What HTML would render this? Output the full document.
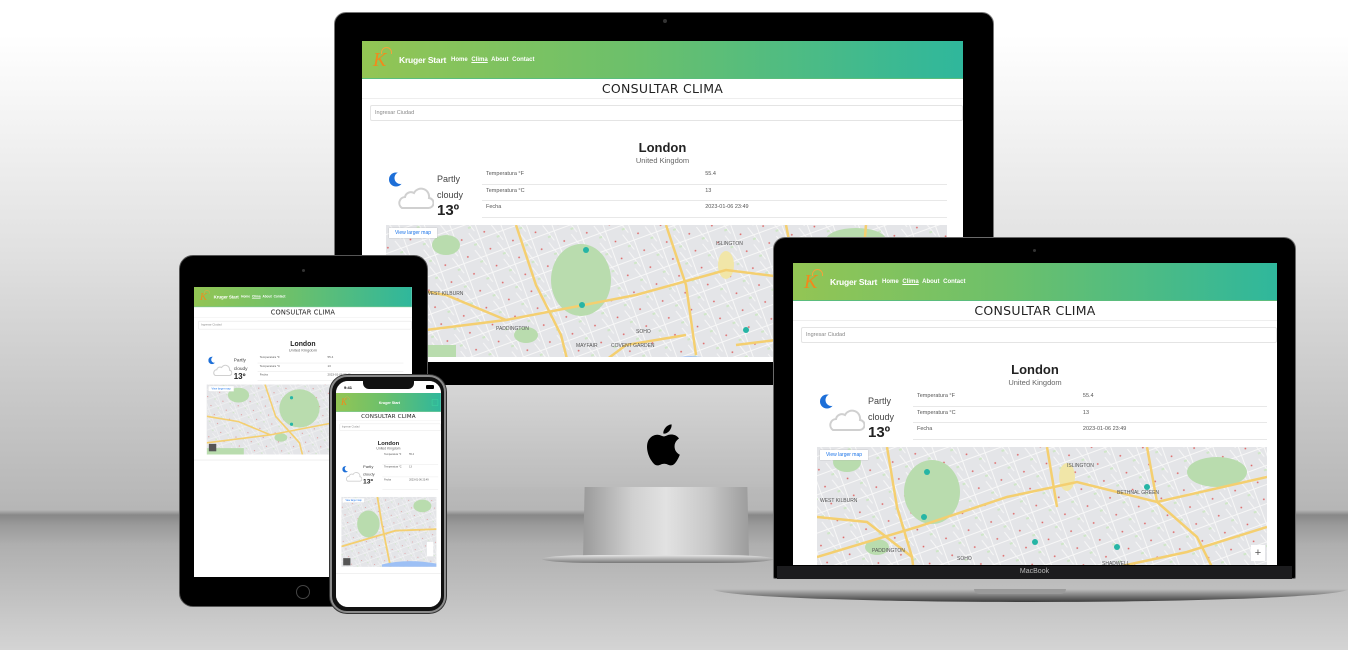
<!DOCTYPE html>
<html><head><meta charset="utf-8">
<style>
*{margin:0;padding:0;box-sizing:border-box}
body{width:1348px;height:650px;overflow:hidden;position:relative;font-family:"Liberation Sans",sans-serif;
background:linear-gradient(180deg,#fff 0px,#fff 35px,#f2f2f2 130px,#e1e1e1 250px,#cbcbcb 380px,#b6b6b6 510px,#888 515px,#9a9a9a 525px,#afafaf 545px,#c6c6c6 610px,#d4d4d4 650px)}
.abs{position:absolute}
.scr{position:absolute;overflow:hidden;background:#fff}
.app{position:absolute;left:0;top:0;background:#fff;transform-origin:0 0;color:#333}
.nav{height:38px;background:linear-gradient(90deg,#93c554,#6cc06b 45%,#2fb79c);position:relative;border-bottom:1px solid #5bbd7d}
.logo{position:absolute;left:11px;top:8px;font:italic 20px "Liberation Serif",serif;color:#f18a1c}
.logo:after{content:"";position:absolute;left:8px;top:-2px;width:9px;height:6px;border:1px solid #f3a33b;border-bottom:none;border-radius:8px 8px 0 0}
.brand{position:absolute;left:37px;top:14px;font-size:8.5px;color:#fff;font-weight:bold;letter-spacing:-.2px}
.links{position:absolute;left:89px;top:16px;font-size:6px;color:#fff;font-weight:bold;word-spacing:2px}
.links u{text-decoration:underline}
.title{text-align:center;font:12.5px "DejaVu Sans",sans-serif;color:#222;height:20px;line-height:20px;letter-spacing:.3px;border-bottom:1px solid #eee}
.inp{margin:6px 0 0 8px;height:16px;border:1px solid #e4e4e4;font-size:5.5px;color:#888;padding:4px 4px;border-radius:2px}
.city{text-align:center;font-weight:bold;font-size:13px;color:#222;margin-top:19px;height:16px}
.cty{text-align:center;font-size:7.5px;color:#666;margin-top:0px;height:10px}
.wx{position:relative;height:57px;margin-top:2px}
.moon{position:absolute;left:27px;top:3px}
.cloud{position:absolute;left:32px;top:14px}
.pc{position:absolute;left:75px;top:3px;font-size:9px;color:#444;line-height:16px}
.deg{position:absolute;left:75px;top:34px;font-size:15px;font-weight:bold;color:#222}
.tbl{position:absolute;left:120px;right:16px;top:0}
.row{height:16.5px;border-bottom:1px solid #e8e8e8;font-size:5.5px;color:#555;position:relative;line-height:12px;padding-left:4px}
.row b{font-weight:normal;position:absolute;left:48%}
.map{margin:0 16px 0 24px;height:132px;position:relative;overflow:hidden;background:#e6e7e9}
.map svg{position:absolute;left:0;top:0}
.vl{position:absolute;left:3px;top:3px;background:#fff;color:#1a73e8;font-size:5px;padding:2px 6px;box-shadow:0 0 1px #aaa}
.hr{border-top:1px solid #e0e0e0;margin-top:10px}
</style></head><body>
<svg width="0" height="0" style="position:absolute"><defs>
<pattern id="st" width="24" height="18" patternUnits="userSpaceOnUse" patternTransform="rotate(-20)">
<rect width="24" height="18" fill="#e4e5e8"/><path d="M0 9H24M12 0V18M3 0L9 18" stroke="#f7f7f7" stroke-width="1"/><circle cx="18" cy="4" r=".9" fill="#d66"/><rect x="4" y="12" width="3" height="2" fill="#cfe6c8"/></pattern>
<g id="moon"><circle cx="7" cy="8.5" r="7" fill="#1d6fd8"/><circle cx="11.5" cy="7" r="6" fill="#fff"/></g>
</defs></svg>

<!-- iMac -->
<div class="abs" style="left:334px;top:12px;width:660px;height:375px;background:#000;border-radius:12px 12px 0 0;border:1px solid #777"></div>
<div class="abs" style="left:334px;top:385px;width:660px;height:102px;background:linear-gradient(180deg,#d6d6d6,#c6c6c6 60%,#bcbcbc);border-radius:0 0 4px 4px"></div>
<svg class="abs" style="left:645px;top:424px" width="36" height="42" viewBox="0 0 170 200"><path d="M140 106c0-24 20-36 21-37-11-17-29-19-35-19-15-2-29 9-37 9-8 0-19-9-32-8-16 0-31 10-40 24-17 30-4 74 12 98 8 12 18 25 30 24 12 0 17-8 32-8 15 0 19 8 32 8 13 0 21-12 29-24 9-13 13-27 13-27s-25-10-25-40zM116 32c7-8 11-19 10-30-10 0-22 7-29 15-6 7-12 18-10 29 11 1 22-6 29-14z" fill="#000"/></svg>
<div class="abs" style="left:583px;top:487px;width:166px;height:72px;background:linear-gradient(90deg,#9a9a9a,#d0d0d0 30%,#e2e2e2 50%,#c8c8c8 75%,#9c9c9c);clip-path:polygon(1% 0,99% 0,100% 100%,0 100%)"></div>
<div class="abs" style="left:542px;top:555px;width:232px;height:8px;background:linear-gradient(180deg,#e6e6e6,#777);border-radius:50%/100%"></div>
<div class="abs" style="left:663px;top:19px;width:4px;height:4px;border-radius:50%;background:#333"></div>

<div class="scr" style="left:362px;top:41px;width:601px;height:321px">
 <div class="app" style="width:601px;height:330px">
  <div class="nav"><div class="logo">K</div><div class="brand">Kruger Start</div><div class="links">Home <u>Clima</u> About Contact</div></div>
  <div class="title">CONSULTAR CLIMA</div>
  <div class="inp">Ingresar Ciudad</div>
  <div class="city">London</div><div class="cty">United Kingdom</div>
  <div class="wx">
   <svg class="moon" width="15" height="17" viewBox="0 0 15 17"><use href="#moon"/></svg>
   <svg class="cloud" width="40" height="28" viewBox="0 0 40 28"><path d="M8 26h26a5 5 0 0 0 1-10 8 8 0 0 0-15-5 6 6 0 0 0-9 4 6 6 0 0 0-3 11z" fill="#fff" stroke="#d0d0d0" stroke-width="2"/></svg>
   <div class="pc">Partly<br>cloudy</div><div class="deg">13º</div>
   <div class="tbl"><div class="row">Temperatura °F<b>55.4</b></div><div class="row">Temperatura °C<b>13</b></div><div class="row">Fecha<b>2023-01-06 23:49</b></div></div>
  </div>
  <div class="map">
   <svg width="600" height="150" viewBox="0 0 600 150"><rect width="600" height="150" fill="url(#st)"/>
    <g fill="#b9dcae"><ellipse cx="195" cy="55" rx="30" ry="36"/><ellipse cx="60" cy="20" rx="14" ry="10"/><rect x="0" y="120" width="70" height="30"/><ellipse cx="470" cy="15" rx="30" ry="12"/><ellipse cx="140" cy="110" rx="12" ry="8"/><ellipse cx="340" cy="40" rx="8" ry="14" fill="#f1e6a8"/><ellipse cx="20" cy="60" rx="10" ry="8"/></g>
    <g fill="none" stroke="#f4cf70" stroke-width="2.5"><path d="M0 110 L120 95 L250 70 L340 45 L420 55 L520 40 L600 50"/><path d="M130 0 L150 60 L175 110 L185 150"/><path d="M280 0 L300 60 L310 130"/><path d="M400 0 L410 50 L450 90 L480 150"/><path d="M0 60 L60 70 L120 95"/><path d="M350 120 L430 110 L520 140 L600 130"/><path d="M480 0 L475 60 L520 150"/><path d="M200 150 L240 120 L300 110"/></g>
    <path d="M260 145 Q300 120 340 140 T430 130 L600 145 L600 150 L260 150z" fill="#9dc0f5"/>
    <g fill="#26b5a5"><circle cx="200" cy="25" r="3"/><circle cx="196" cy="80" r="3"/><circle cx="420" cy="92" r="3"/><circle cx="470" cy="40" r="3"/><circle cx="360" cy="105" r="3"/></g>
    <g font-size="5" fill="#555" font-family="Liberation Sans"><text x="330" y="20">ISLINGTON</text><text x="110" y="105">PADDINGTON</text><text x="250" y="108">SOHO</text><text x="440" y="110">CITY OF LONDON</text><text x="40" y="70">WEST KILBURN</text><text x="190" y="122">MAYFAIR</text><text x="225" y="122">COVENT GARDEN</text></g>
    <text x="240" y="140" font-size="10" font-weight="bold" fill="#333" font-family="Liberation Sans">London</text>
   </svg>
   <div class="vl">View larger map</div>
  </div>
 </div>
</div>

<!-- iPad -->
<div class="abs" style="left:179px;top:255px;width:249px;height:352px;background:#000;border-radius:14px;border:1px solid #555"></div>
<div class="abs" style="left:302px;top:269px;width:3px;height:3px;border-radius:50%;background:#333"></div>
<div class="abs" style="left:296px;top:585px;width:14px;height:14px;border-radius:50%;border:1.5px solid #444"></div>
<div class="scr" style="left:194px;top:287px;width:218px;height:290px">
 <div class="app" style="width:411px;height:547px;transform:scale(.53)">
  <div class="nav"><div class="logo">K</div><div class="brand">Kruger Start</div><div class="links">Home <u>Clima</u> About Contact</div></div>
  <div class="title">CONSULTAR CLIMA</div>
  <div class="inp">Ingresar Ciudad</div>
  <div class="city">London</div><div class="cty">United Kingdom</div>
  <div class="wx">
   <svg class="moon" width="15" height="17" viewBox="0 0 15 17"><use href="#moon"/></svg>
   <svg class="cloud" width="40" height="28" viewBox="0 0 40 28"><path d="M8 26h26a5 5 0 0 0 1-10 8 8 0 0 0-15-5 6 6 0 0 0-9 4 6 6 0 0 0-3 11z" fill="#fff" stroke="#d0d0d0" stroke-width="2"/></svg>
   <div class="pc">Partly<br>cloudy</div><div class="deg">13º</div>
   <div class="tbl"><div class="row">Temperatura °F<b>55.4</b></div><div class="row">Temperatura °C<b>13</b></div><div class="row">Fecha<b>2023-01-06 23:49</b></div></div>
  </div>
  <div class="map">
   <svg width="600" height="150" viewBox="0 0 600 150"><rect width="600" height="150" fill="url(#st)"/>
    <g fill="#b9dcae"><ellipse cx="175" cy="45" rx="38" ry="36"/><ellipse cx="60" cy="20" rx="20" ry="14"/><rect x="0" y="120" width="70" height="30"/><ellipse cx="140" cy="100" rx="12" ry="8"/></g>
    <g fill="none" stroke="#f4cf70" stroke-width="3"><path d="M0 110 L120 95 L250 70 L340 45 L420 55 L520 40 L600 50"/><path d="M110 0 L130 60 L175 110 L185 150"/><path d="M260 0 L280 60 L290 130"/><path d="M0 60 L60 70 L120 95"/></g>
    <path d="M260 145 Q300 120 340 140 T430 130 L600 145 L600 150 L260 150z" fill="#9dc0f5"/>
    <g fill="#26b5a5"><circle cx="160" cy="25" r="3"/><circle cx="160" cy="75" r="3"/><circle cx="290" cy="100" r="3"/></g>
    <rect x="4" y="112" width="14" height="14" fill="#555"/>
    <text x="240" y="140" font-size="12" font-weight="bold" fill="#333" font-family="Liberation Sans">London</text>
   </svg>
   <div class="vl">View larger map</div>
  </div>
  <div class="hr"></div>
 </div>
</div>

<!-- iPhone -->
<div class="abs" style="left:330px;top:375px;width:116px;height:238px;background:#111;border-radius:17px;border:2px solid #8a8a8a;box-shadow:0 0 0 1px #333"></div>
<div class="scr" style="left:336px;top:381px;width:105px;height:226px;border-radius:12px">
 <div class="abs" style="left:0;top:0;width:105px;height:12px;background:#fff;font-size:4px;font-weight:bold;padding:4px 0 0 8px">9:41</div>
 <div class="abs" style="left:90px;top:4px;width:8px;height:4px;background:#000;border-radius:1px"></div>
 <div class="abs" style="left:27px;top:0;width:51px;height:8px;background:#111;border-radius:0 0 6px 6px"></div>
 <div class="app" style="width:233px;height:480px;top:12px;transform:scale(.45)">
  <div class="nav" style="height:42px"><div class="logo" style="top:10px">K</div><div class="brand" style="left:95px;top:16px">Kruger Start</div><div class="abs" style="right:6px;top:14px;width:14px;height:14px;border:1px solid #4ea;opacity:.6"></div></div>
  <div class="title">CONSULTAR CLIMA</div>
  <div class="inp">Ingresar Ciudad</div>
  <div class="city">London</div><div class="cty">United Kingdom</div>
  <div class="wx" style="height:100px">
   <svg class="moon" style="left:14px;top:30px" width="15" height="17" viewBox="0 0 15 17"><use href="#moon"/></svg>
   <svg class="cloud" style="left:18px;top:39px" width="40" height="28" viewBox="0 0 40 28"><path d="M8 26h26a5 5 0 0 0 1-10 8 8 0 0 0-15-5 6 6 0 0 0-9 4 6 6 0 0 0-3 11z" fill="#fff" stroke="#d0d0d0" stroke-width="2"/></svg>
   <div class="pc" style="left:60px;top:25px">Partly<br>cloudy</div><div class="deg" style="left:60px;top:57px">13º</div>
   <div class="tbl" style="left:103px;right:6px"><div class="row" style="height:28px">Temperatura °F<b>55.4</b></div><div class="row" style="height:28px">Temperatura °C<b>13</b></div><div class="row" style="height:28px">Fecha<b>2023-01-06 23:49</b></div></div>
  </div>
  <div class="map" style="margin:0 10px 0 12px;height:155px">
   <svg width="600" height="160" viewBox="0 0 600 160"><rect width="600" height="160" fill="url(#st)"/>
    <g fill="#b9dcae"><ellipse cx="60" cy="60" rx="25" ry="30"/><ellipse cx="180" cy="20" rx="20" ry="14"/></g>
    <g fill="none" stroke="#f4cf70" stroke-width="4"><path d="M0 110 L120 75 L250 70"/><path d="M80 0 L90 60 L110 160"/></g>
    <path d="M90 150 Q150 135 220 150 L220 160 L90 160z" fill="#9dc0f5"/>
    <rect x="4" y="136" width="16" height="16" fill="#555"/><rect x="190" y="100" width="14" height="32" fill="#fff"/>
   </svg>
   <div class="vl">View larger map</div>
  </div>
  <div class="hr" style="margin-top:14px"></div>
 </div>
</div>

<!-- MacBook -->
<div class="abs" style="left:773px;top:237px;width:523px;height:342px;background:#000;border-radius:12px 12px 2px 2px;border:1.5px solid #6a6a6a"></div>
<div class="abs" style="left:1033px;top:249px;width:3px;height:3px;border-radius:50%;background:#333"></div>
<div class="abs" style="left:777px;top:566px;width:515px;height:13px;background:#1c1c1e;color:#bbb;font-size:7px;text-align:center;line-height:12px">MacBook</div>
<div class="abs" style="left:713px;top:589px;width:635px;height:13px;background:linear-gradient(180deg,#bfbfbf,#8a8a8a 40%,#3a3a3a);border-radius:0 0 50% 50%/0 0 100% 100%"></div>
<div class="abs" style="left:974px;top:589px;width:92px;height:5px;background:#9a9a9a;border-radius:0 0 5px 5px"></div>
<div class="scr" style="left:793px;top:263px;width:484px;height:302px">
 <div class="app" style="width:484px;height:330px">
  <div class="nav"><div class="logo">K</div><div class="brand">Kruger Start</div><div class="links">Home <u>Clima</u> About Contact</div></div>
  <div class="title">CONSULTAR CLIMA</div>
  <div class="inp">Ingresar Ciudad</div>
  <div class="city">London</div><div class="cty">United Kingdom</div>
  <div class="wx">
   <svg class="moon" width="15" height="17" viewBox="0 0 15 17"><use href="#moon"/></svg>
   <svg class="cloud" width="40" height="28" viewBox="0 0 40 28"><path d="M8 26h26a5 5 0 0 0 1-10 8 8 0 0 0-15-5 6 6 0 0 0-9 4 6 6 0 0 0-3 11z" fill="#fff" stroke="#d0d0d0" stroke-width="2"/></svg>
   <div class="pc">Partly<br>cloudy</div><div class="deg">13º</div>
   <div class="tbl" style="right:10px"><div class="row">Temperatura °F<b>55.4</b></div><div class="row">Temperatura °C<b>13</b></div><div class="row">Fecha<b>2023-01-06 23:49</b></div></div>
  </div>
  <div class="map" style="margin-right:10px">
   <svg width="600" height="150" viewBox="0 0 600 150"><rect width="600" height="150" fill="url(#st)"/>
    <g fill="#b9dcae"><ellipse cx="115" cy="45" rx="28" ry="32"/><ellipse cx="30" cy="15" rx="14" ry="10"/><ellipse cx="400" cy="25" rx="30" ry="15"/><ellipse cx="60" cy="100" rx="12" ry="8"/><ellipse cx="250" cy="30" rx="8" ry="14" fill="#f1e6a8"/></g>
    <g fill="none" stroke="#f4cf70" stroke-width="2.5"><path d="M0 110 L100 80 L190 50 L260 35 L340 55 L450 30"/><path d="M70 0 L80 60 L95 110 L100 150"/><path d="M230 0 L240 60"/><path d="M330 0 L340 55 L380 90 L410 150"/><path d="M300 120 L370 105 L450 80"/><path d="M0 70 L50 75 L95 110"/></g>
    <g fill="#26b5a5"><circle cx="110" cy="25" r="3"/><circle cx="107" cy="70" r="3"/><circle cx="218" cy="95" r="3"/><circle cx="330" cy="40" r="3"/><circle cx="300" cy="100" r="3"/></g>
    <g font-size="5" fill="#555" font-family="Liberation Sans"><text x="250" y="20">ISLINGTON</text><text x="55" y="105">PADDINGTON</text><text x="140" y="113">SOHO</text><text x="285" y="118">SHADWELL</text><text x="3" y="55">WEST KILBURN</text><text x="300" y="47">BETHNAL GREEN</text></g>
   </svg>
   <div class="vl">View larger map</div>
   <div class="abs" style="right:2px;top:98px;width:14px;height:16px;background:#fff;font-size:11px;text-align:center;color:#555;line-height:16px">+</div>
  </div>
 </div>
</div>
</body></html>
